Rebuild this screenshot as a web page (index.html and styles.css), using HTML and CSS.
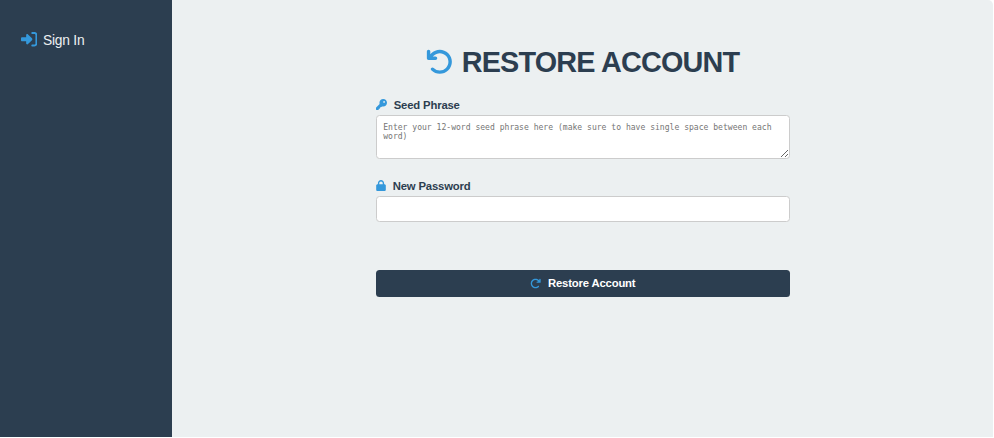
FILE: index.html
```html
<!DOCTYPE html>
<html lang="en">
<head>
<meta charset="utf-8">
<title>Restore Account</title>
<link rel="stylesheet" href="styles.css">
</head>
<body>
<div class="app">
  <nav class="sidebar">
    <a class="nav-link"><svg class="icon" viewBox="0 0 512 512"><path d="M217.9 105.9L340.7 228.7c7.2 7.2 11.3 17.1 11.3 27.3s-4.1 20.1-11.3 27.3L217.9 406.1c-6.4 6.4-15 9.9-24 9.9c-18.7 0-33.9-15.2-33.9-33.9l0-62.1L32 320c-17.7 0-32-14.3-32-32l0-64c0-17.7 14.3-32 32-32l128 0 0-62.1c0-18.7 15.2-33.9 33.9-33.9c9 0 17.6 3.6 24 9.9zM352 416l64 0c17.7 0 32-14.3 32-32l0-256c0-17.7-14.3-32-32-32l-64 0c-17.7 0-32-14.3-32-32s14.3-32 32-32l64 0c53 0 96 43 96 96l0 256c0 53-43 96-96 96l-64 0c-17.7 0-32-14.3-32-32s14.3-32 32-32z"/></svg><span>Sign In</span></a>
  </nav>
  <main class="content">
    <h1 class="title"><svg class="icon" viewBox="0 0 512 512"><path d="M125.7 160H176c17.7 0 32 14.3 32 32s-14.3 32-32 32H48c-17.7 0-32-14.3-32-32V64c0-17.7 14.3-32 32-32s32 14.3 32 32v51.2L97.6 97.6c87.5-87.5 229.3-87.5 316.8 0s87.5 229.3 0 316.8s-229.3 87.5-316.8 0c-12.5-12.5-12.5-32.8 0-45.3s32.8-12.5 45.3 0c62.5 62.5 163.8 62.5 226.3 0s62.5-163.8 0-226.3s-163.8-62.5-226.3 0L125.7 160z"/></svg><span>RESTORE ACCOUNT</span></h1>
    <form class="form">
      <label class="label" for="seed"><svg class="icon icon-key" viewBox="0 0 512 512"><path d="M336 352c97.2 0 176-78.8 176-176S433.2 0 336 0S160 78.8 160 176c0 18.7 2.9 36.8 8.3 53.7L7 391c-4.5 4.5-7 10.6-7 17v80c0 13.3 10.7 24 24 24h80c13.3 0 24-10.7 24-24V448h40c13.3 0 24-10.7 24-24V384h40c6.4 0 12.5-2.5 17-7l33.3-33.3c16.9 5.4 35 8.3 53.7 8.3zM376 96a40 40 0 1 1 0 80 40 40 0 1 1 0-80z"/></svg><span>Seed Phrase</span></label>
      <textarea class="field seed" id="seed" placeholder="Enter your 12-word seed phrase here (make sure to have single space between each word)"></textarea>
      <label class="label" for="password"><svg class="icon icon-lock" viewBox="0 0 448 512"><path d="M144 144v48H304V144c0-44.2-35.8-80-80-80s-80 35.8-80 80zM80 192V144C80 64.5 144.5 0 224 0s144 64.5 144 144v48h16c35.3 0 64 28.7 64 64V448c0 35.3-28.7 64-64 64H64c-35.3 0-64-28.7-64-64V256c0-35.3 28.7-64 64-64H80z"/></svg><span>New Password</span></label>
      <input class="field password" id="password" type="password">
      <button class="submit" type="button"><svg class="icon" viewBox="0 0 512 512"><path d="M386.3 160H336c-17.7 0-32 14.3-32 32s14.3 32 32 32H464c17.7 0 32-14.3 32-32V64c0-17.7-14.3-32-32-32s-32 14.3-32 32v51.2L414.4 97.6c-87.5-87.5-229.3-87.5-316.8 0s-87.5 229.3 0 316.8s229.3 87.5 316.8 0c12.5-12.5 12.5-32.8 0-45.3s-32.8-12.5-45.3 0c-62.5 62.5-163.8 62.5-226.3 0s-62.5-163.8 0-226.3s163.8-62.5 226.3 0L386.3 160z"/></svg><span>Restore Account</span></button>
    </form>
  </main>
</div>
</body>
</html>
```
FILE: styles.css
```css
* { box-sizing: border-box; }
body {
  margin: 0;
  background: #fff;
  color: #2c3e50;
  font-family: "Liberation Sans", Arial, sans-serif;
}
.app {
  display: flex;
  width: 993px;
  height: 437px;
  background: #ecf0f1;
  border-top-right-radius: 5px;
}
.icon { fill: #3498db; flex: none; }
.sidebar {
  width: 172.4px;
  padding: 30px 20.5px;
  background: #2c3e50;
}
.nav-link {
  display: flex;
  align-items: center;
  gap: 6px;
  height: 20px;
  color: #ecf0f1;
  font-size: 13.8px;
  letter-spacing: -0.22px;
}
.nav-link .icon { width: 16.5px; height: 16.5px; margin-top: -2px; }
.content {
  flex: 1;
  display: flex;
  flex-direction: column;
  align-items: center;
  padding-top: 44px;
}
.title {
  display: flex;
  align-items: center;
  gap: 8px;
  height: 36px;
  margin: 0;
  font-size: 28.8px;
  letter-spacing: -0.8px;
  line-height: 36px;
  white-space: nowrap;
}
.title .icon { width: 27.6px; height: 27.6px; margin-top: -1px; }
.form {
  display: flex;
  flex-direction: column;
  width: 414px;
  margin-top: 18px;
}
.label {
  display: flex;
  align-items: center;
  gap: 7px;
  height: 14px;
  font-size: 11.3px;
  font-weight: bold;
  letter-spacing: -0.16px;
}
.icon-key { width: 11px; height: 11px; margin-top: -1px; }
.icon-lock { width: 10px; height: 11px; margin-top: -1px; }
.field {
  display: block;
  width: 100%;
  margin: 3px 0 0;
  border: 1px solid #ccc;
  border-radius: 3.5px;
  background: #fff;
  outline: none;
}
.seed {
  height: 44px;
  margin-bottom: 20px;
  padding: 7px 6.5px;
  font: 8.07px/9px "DejaVu Sans Mono", monospace;
  resize: vertical;
}
.seed::placeholder { color: #757575; }
.password { height: 26.4px; padding: 7px; }
.submit {
  display: flex;
  align-items: center;
  justify-content: center;
  gap: 7px;
  height: 26.6px;
  margin-top: 48px;
  padding: 0 0 1px;
  border: 0;
  border-radius: 3.5px;
  background: #2c3e50;
  color: #fff;
  font: bold 11.3px "Liberation Sans", Arial, sans-serif;
  letter-spacing: -0.16px;
}
.submit .icon { width: 11px; height: 11px; }
```
